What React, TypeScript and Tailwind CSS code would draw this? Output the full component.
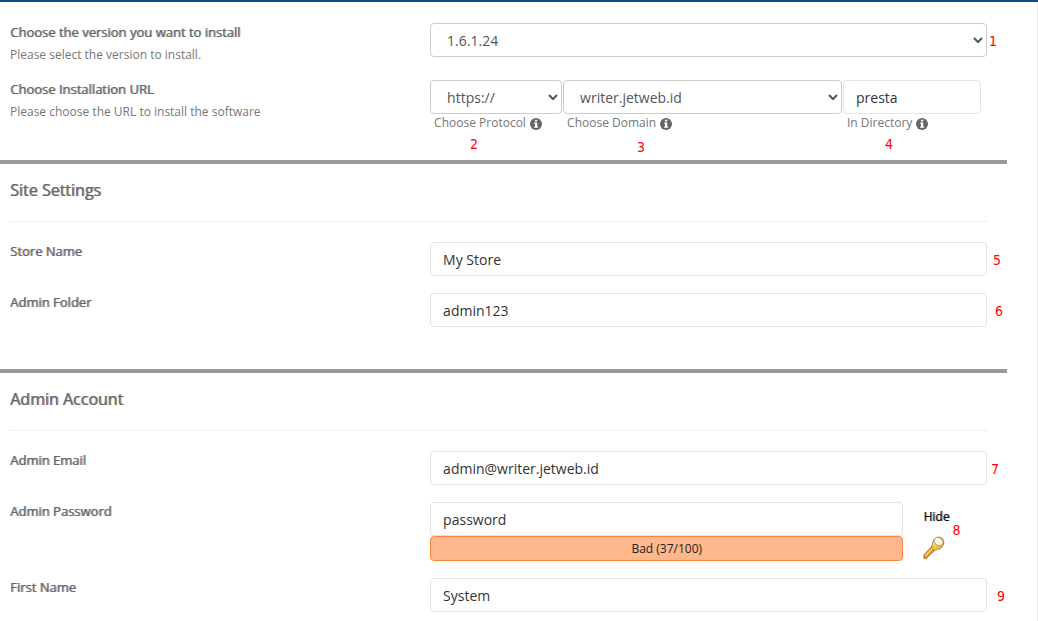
import { FC, ReactNode, useState } from 'react';

const inputClass =
  'block w-full h-[34px] px-3 rounded border border-[#e3e3e3] bg-white text-sm text-[#333] focus:outline-none focus:border-blue-400';

const selectClass =
  'block w-full h-[34px] px-3 rounded border border-[#ccc] bg-white text-sm text-[#555] focus:outline-none focus:border-blue-400';

interface MarkerProps {
  n: number;
  className: string;
}

// Red step number drawn over the form
const Marker: FC<MarkerProps> = ({ n, className }) => (
  <span
    className={`absolute font-['DejaVu_Sans_Condensed','DejaVu_Sans',sans-serif] text-sm leading-4 text-[#f00] ${className}`}
  >
    {n}
  </span>
);

const InfoIcon: FC = () => (
  <svg viewBox="0 0 12 12" className="inline-block size-3 ml-1 mt-px align-middle" aria-hidden="true">
    <circle cx="6" cy="6" r="6" fill="#666" />
    <path d="M5 1.8h2.2v1.7H5zM4.1 4.5h3.1v4h.9v1.3H4.1V8.500h.9V5.700h-.9z" fill="#fff" />
  </svg>
);

const KeyIcon: FC = () => (
  <svg viewBox="0 0 22 24" className="w-[22px] h-6" aria-hidden="true">
    <defs>
      <linearGradient id="keyGold" x1="0" y1="0" x2="1" y2="1">
        <stop offset="0" stopColor="#ffe58a" />
        <stop offset="0.5" stopColor="#fcc840" />
        <stop offset="1" stopColor="#e0982a" />
      </linearGradient>
    </defs>
    <path
      d="M9.500 9.800 1 18.800v3.600h2.700l1.200-2.200 1.700-.6 1-2 1.800-.7 3-3.900z"
      fill="#e9a02c"
      stroke="#9a6a2c"
      strokeWidth="0.9"
      strokeLinejoin="round"
    />
    <path d="M10.500 11 2.200 19.800" stroke="#ffd56a" strokeWidth="1.200" />
    <path
      d="M14.500 1.200c3.800-.8 6.800 2 6.300 5.600-.4 3.900-3.200 6.400-6.400 6.500-1 .2-2 1.300-2.700 1.200L8.700 11.500c-.2-.8.6-1.700.6-2.700.1-3.600 1.900-6.800 5.200-7.600z"
      fill="url(#keyGold)"
      stroke="#a27a45"
      strokeWidth="0.9"
    />
    <ellipse cx="15.500" cy="5.600" rx="4.600" ry="3.700" transform="rotate(40 15.500 5.600)" fill="#fff" stroke="#aa925f" strokeWidth="0.8" />
    <path d="m12.800 3.600 5.200 4.300" stroke="#ddd" strokeWidth="0.8" />
  </svg>
);

interface RowProps {
  id: string;
  label: string;
  hint?: string;
  children: ReactNode;
}

const Row: FC<RowProps> = ({ id, label, hint, children }) => (
  <div className="flex items-start">
    <div className="w-[43%] shrink-0">
      <label
        htmlFor={id}
        className="block text-[13px] leading-[18px] text-[#666] [text-shadow:1px_0_0_#666666b0]"
      >
        {label}
      </label>
      {hint && <p className="mt-1 text-xs leading-5 text-[#777]">{hint}</p>}
    </div>
    <div className="relative flex-1 min-w-0">{children}</div>
  </div>
);

interface SectionProps {
  title: string;
  className?: string;
  children: ReactNode;
}

const Section: FC<SectionProps> = ({ title, className = '', children }) => (
  <section className={`border-t-4 border-[#999] pl-2.5 pr-5 ${className}`}>
    <h2 className="pt-4 pb-[21px] text-base leading-5 text-[#666] [text-shadow:1px_0_0_#666666b0] border-b border-[#eee]">
      {title}
    </h2>
    <div className="pt-5 flex flex-col gap-[17px]">{children}</div>
  </section>
);

export default function App() {
  const [version, setVersion] = useState('1.6.1.24');
  const [protocol, setProtocol] = useState('https://');
  const [domain, setDomain] = useState('writer.jetweb.id');
  const [showPassword, setShowPassword] = useState(true);

  return (
    <div className="min-h-screen bg-white border-t-2 border-[#0d4a92] font-['Open_Sans',sans-serif]">
      <form className="min-h-[619px] pr-[30px] border-r border-[#e9e9e9]" onSubmit={(e) => e.preventDefault()}>
        <div className="pl-2.5 pr-5 pt-[21px] pb-7 flex flex-col gap-[15px]">
          <Row id="version" label="Choose the version you want to install" hint="Please select the version to install.">
            <select id="version" value={version} onChange={(e) => setVersion(e.target.value)} className={selectClass}>
              <option>1.6.1.24</option>
            </select>
            <Marker n={1} className="left-full top-2.5 ml-0.5" />
          </Row>

          <Row id="protocol" label="Choose Installation URL" hint="Please choose the URL to install the software">
            <div className="grid grid-cols-[132fr_279fr_138fr] gap-px pr-1.5">
              <div className="relative">
                <select
                  id="protocol"
                  value={protocol}
                  onChange={(e) => setProtocol(e.target.value)}
                  className={selectClass}
                >
                  <option>https://</option>
                </select>
                <label htmlFor="protocol" className="block pl-1 text-xs leading-[18px] text-[#777]">
                  Choose Protocol
                  <InfoIcon />
                </label>
                <Marker n={2} className="left-10 top-14" />
              </div>
              <div className="relative">
                <select id="domain" value={domain} onChange={(e) => setDomain(e.target.value)} className={selectClass}>
                  <option>writer.jetweb.id</option>
                </select>
                <label htmlFor="domain" className="block pl-1 text-xs leading-[18px] text-[#777]">
                  Choose Domain
                  <InfoIcon />
                </label>
                <Marker n={3} className="left-[74px] top-[59px]" />
              </div>
              <div className="relative">
                <input id="directory" type="text" defaultValue="presta" className={inputClass} />
                <label htmlFor="directory" className="block pl-1 text-xs leading-[18px] text-[#777]">
                  In Directory
                  <InfoIcon />
                </label>
                <Marker n={4} className="left-[42px] top-14" />
              </div>
            </div>
          </Row>
        </div>

        <Section title="Site Settings" className="pb-[42px]">
          <Row id="store" label="Store Name">
            <input id="store" type="text" defaultValue="My Store" className={inputClass} />
            <Marker n={5} className="left-full top-2.5 ml-1.5" />
          </Row>
          <Row id="folder" label="Admin Folder">
            <input id="folder" type="text" defaultValue="admin123" className={inputClass} />
            <Marker n={6} className="left-full top-2.5 ml-2" />
          </Row>
        </Section>

        <Section title="Admin Account">
          <Row id="email" label="Admin Email">
            <input id="email" type="text" defaultValue="admin@writer.jetweb.id" className={inputClass} />
            <Marker n={7} className="left-full top-2.5 ml-1" />
          </Row>
          <Row id="password" label="Admin Password">
            <div className="flex">
              <div className="w-[85%]">
                <input
                  id="password"
                  type={showPassword ? 'text' : 'password'}
                  defaultValue="password"
                  className={inputClass}
                />
                <div className="h-[25px] rounded border border-[#ff853c] bg-[#ffb78c] text-center text-xs leading-[23px] text-[#222]">
                  Bad (37/100)
                </div>
              </div>
              <div className="relative pl-5 pt-[5px] flex flex-col items-start gap-[9px]">
                <button
                  type="button"
                  onClick={() => setShowPassword(!showPassword)}
                  className="text-xs leading-5 text-black [text-shadow:1px_0_0_#00000080]"
                >
                  {showPassword ? 'Hide' : 'Show'}
                </button>
                <button type="button" aria-label="Generate a random password">
                  <KeyIcon />
                </button>
                <Marker n={8} className="left-[49px] top-5" />
              </div>
            </div>
          </Row>
          <Row id="first" label="First Name">
            <input id="first" type="text" defaultValue="System" className={inputClass} />
            <Marker n={9} className="left-full top-2.5 ml-2.5" />
          </Row>
        </Section>
      </form>
    </div>
  );
}
